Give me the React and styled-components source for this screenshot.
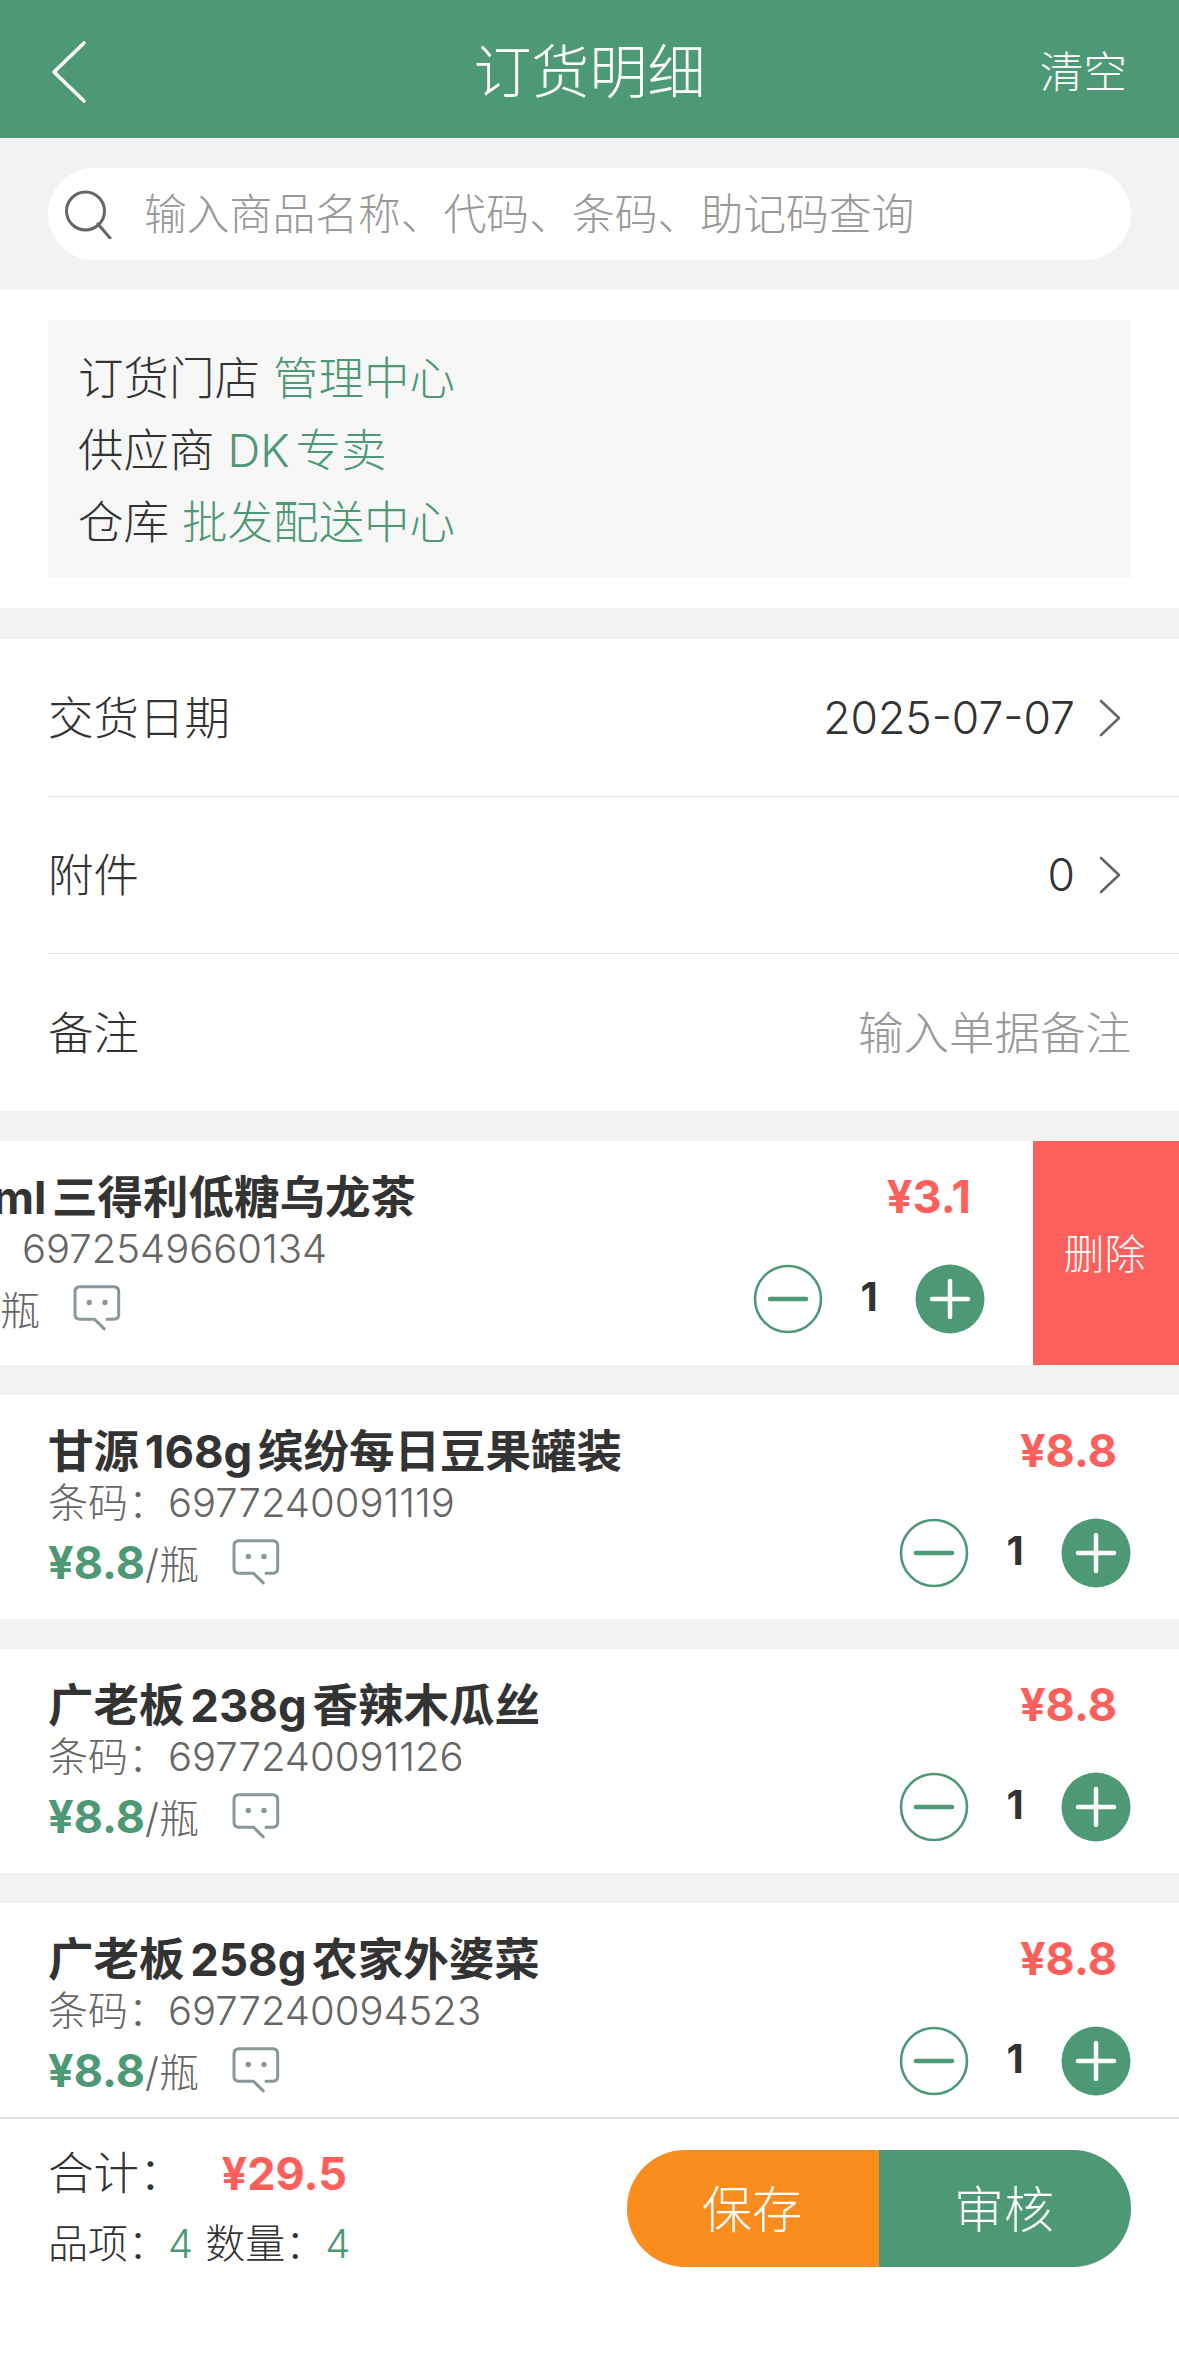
import styled, { createGlobalStyle } from "styled-components";

const GREEN = "#4e9975";
const RED = "#fd5f5c";

const GlobalStyle = createGlobalStyle`
  html, body {
    margin: 0;
    padding: 0;
    background: #fff;
  }
  * {
    box-sizing: border-box;
  }
`;

const Page = styled.div`
  width: 1179px;
  height: 2358px;
  display: flex;
  flex-direction: column;
  overflow: hidden;
  background: #f2f2f2;
  color: #333;
  font-family: Inter, "Noto Sans CJK SC", sans-serif;
`;

const Header = styled.div`
  height: 138px;
  flex: none;
  background: ${GREEN};
  color: #fff;
  display: flex;
  align-items: center;
  justify-content: space-between;
  padding: 6px 52px 0 50px;
  position: relative;
`;

const Title = styled.div`
  position: absolute;
  left: 0;
  right: 0;
  top: 0;
  padding-top: 3px;
  text-align: center;
  font-size: 58px;
  line-height: 138px;
  font-weight: 300;
`;

const Clear = styled.div`
  font-size: 43.5px;
  font-weight: 300;
  margin-top: -6px;
  position: relative;
`;

const SearchBand = styled.div`
  height: 152px;
  flex: none;
  padding: 30px 48px;
`;

const SearchPill = styled.div`
  height: 92px;
  background: #fff;
  border-radius: 46px;
  display: flex;
  align-items: center;
  padding-left: 16px;
  gap: 32px;
  font-size: 42.8px;
  font-weight: 300;
  color: #999;
`;

const Placeholder = styled.span`
  margin-top: -6px;
`;

const InfoSection = styled.div`
  flex: none;
  background: #fff;
  padding: 30px 48px;
  margin-bottom: 31px;
`;

const InfoBox = styled.div`
  height: 258px;
  background: #f7f7f7;
  padding: 23px 30px;
  font-size: 45.5px;
  line-height: 72px;
  font-weight: 300;
`;

const Hl = styled.span`
  color: ${GREEN};
  margin-left: 13px;
  word-spacing: -7px;
`;

const FieldList = styled.div`
  flex: none;
  background: #fff;
  padding-left: 48px;
  margin-bottom: 30px;
`;

const Field = styled.div`
  height: ${(p) => (p.$first ? "158px" : "157px")};
  display: flex;
  align-items: center;
  justify-content: space-between;
  padding-right: 48px;
  font-size: 45.5px;
  font-weight: 300;
  border-bottom: ${(p) => (p.$last ? "none" : "1.5px solid #e2e2e2")};
`;

const FieldLabel = styled.span`
  margin-top: -6px;
  color: ${(p) => (p.$muted ? "#999" : "#333")};
`;

const FieldValue = styled.div`
  display: flex;
  align-items: center;
`;

const FieldNumber = styled.span`
  font-size: 44.5px;
  margin-right: 23px;
`;

const ChevronIcon = styled.svg`
  margin-right: 9px;
`;

const Items = styled.div`
  flex: 1;
  min-height: 0;
  overflow: hidden;
  display: flex;
  flex-direction: column;
  gap: 30px;
`;

const Item = styled.div`
  flex: none;
  height: 224px;
  background: #fff;
  overflow: hidden;
`;

const ItemInner = styled.div`
  height: 100%;
  position: relative;
  display: flex;
  justify-content: space-between;
  padding: 31px 48px 31px;
  transform: ${(p) => (p.$swiped ? "translateX(-146px)" : "none")};
`;

const ItemLeft = styled.div`
  min-width: 0;
  white-space: nowrap;
`;

const ItemName = styled.div`
  font-size: 45.5px;
  line-height: 54px;
  font-weight: 700;
  word-spacing: -5px;
  margin-top: -1px;
`;

const Barcode = styled.div`
  font-size: 40px;
  line-height: 48px;
  font-weight: 300;
  color: #666;
`;

const PriceLine = styled.div`
  display: flex;
  align-items: center;
  height: 48px;
  margin-top: 11px;
  font-size: 40px;
  font-weight: 300;
  color: #666;
`;

const UnitPrice = styled.span`
  color: ${GREEN};
  font-size: 45px;
  font-weight: 700;
`;

const CommentIcon = styled.svg`
  margin-left: 33px;
`;

const ItemRight = styled.div`
  display: flex;
  flex-direction: column;
  justify-content: space-between;
  align-items: flex-end;
`;

const LinePrice = styled.div`
  color: ${RED};
  font-size: 45px;
  line-height: 50px;
  font-weight: 700;
  margin-right: 14px;
`;

const Stepper = styled.div`
  display: flex;
  align-items: center;
`;

const Qty = styled.div`
  width: 92px;
  text-align: center;
  font-size: 40px;
  font-weight: 700;
  margin-top: -6px;
`;

const DeleteAction = styled.div`
  position: absolute;
  top: 0;
  bottom: 0;
  right: -146px;
  width: 146px;
  padding: 0 3px 4px 0;
  background: ${RED};
  color: #fff;
  font-size: 41px;
  font-weight: 300;
  display: flex;
  align-items: center;
  justify-content: center;
`;

const Footer = styled.div`
  height: 241px;
  flex: none;
  background: #fff;
  border-top: 2px solid #e2e2e2;
  padding: 31px 48px 0;
  display: flex;
  justify-content: space-between;
  align-items: flex-start;
`;

const Totals = styled.div`
  white-space: nowrap;
  margin-top: -3px;
`;

const TotalRow = styled.div`
  display: flex;
  align-items: center;
  font-size: 45.5px;
  line-height: 54px;
  font-weight: 300;
`;

const TotalAmount = styled.span`
  color: ${RED};
  font-size: 45px;
  font-weight: 700;
  margin-left: 37px;
`;

const CountRow = styled.div`
  font-size: 40px;
  line-height: 48px;
  font-weight: 300;
  margin-top: 19px;
`;

const CountValue = styled.span`
  color: ${GREEN};
  margin-right: 12px;
`;

const Actions = styled.div`
  display: flex;
  height: 117px;
  border-radius: 58px;
  overflow: hidden;
`;

const ActionButton = styled.div`
  width: 252px;
  padding: 0 2px 6px 0;
  background: ${(p) => p.$bg};
  color: #fff;
  font-size: 50px;
  font-weight: 300;
  display: flex;
  align-items: center;
  justify-content: center;
`;

const BackIcon = () => (
  <svg width="38" height="64" viewBox="0 0 38 64" style={{ position: "relative" }}>
    <path d="M34 3 L4 32 L34 61" fill="none" stroke="#fff" strokeWidth="3.6" strokeLinecap="round" strokeLinejoin="round" />
  </svg>
);

const SearchIcon = () => (
  <svg width="48" height="50" viewBox="0 0 48 50">
    <circle cx="21.5" cy="22" r="19" fill="none" stroke="#666" strokeWidth="3" />
    <path d="M34 35 L46 49" fill="none" stroke="#666" strokeWidth="3" strokeLinecap="round" />
  </svg>
);

const Chevron = () => (
  <ChevronIcon width="24" height="38" viewBox="0 0 24 38">
    <path d="M3 2 L21 19 L3 36" fill="none" stroke="#666" strokeWidth="2.6" strokeLinecap="round" strokeLinejoin="round" />
  </ChevronIcon>
);

const Comment = () => (
  <CommentIcon width="48" height="46" viewBox="0 0 48 46">
    <path
      d="M34 34.2 H40.7 Q45.7 34.2 45.7 29.2 V6.8 Q45.7 1.8 40.7 1.8 H7 Q2 1.8 2 6.8 V29.2 Q2 34.2 7 34.2 H21.3 L31.3 43.8"
      fill="none"
      stroke="#87979a"
      strokeWidth="3"
      strokeLinecap="round"
      strokeLinejoin="round"
    />
    <circle cx="16.3" cy="17.5" r="2.7" fill="#87979a" />
    <circle cx="32" cy="17.5" r="2.7" fill="#87979a" />
  </CommentIcon>
);

const Minus = () => (
  <svg width="70" height="70" viewBox="0 0 70 70">
    <circle cx="35" cy="35" r="33" fill="#fff" stroke={GREEN} strokeWidth="2.6" />
    <path d="M17 35 H53" stroke={GREEN} strokeWidth="4.5" strokeLinecap="round" />
  </svg>
);

const Plus = () => (
  <svg width="70" height="70" viewBox="0 0 70 70">
    <circle cx="35" cy="35" r="34.5" fill={GREEN} />
    <path d="M17 35 H53 M35 17 V53" stroke="#fff" strokeWidth="4.5" strokeLinecap="round" />
  </svg>
);

const items = [
  { name: "500ml 三得利低糖乌龙茶", code: "6972549660134", price: "¥3.1", swiped: true },
  { name: "甘源 168g 缤纷每日豆果罐装", code: "6977240091119", price: "¥8.8" },
  { name: "广老板 238g 香辣木瓜丝", code: "6977240091126", price: "¥8.8" },
  { name: "广老板 258g 农家外婆菜", code: "6977240094523", price: "¥8.8" },
];

const App = () => {
  return (
    <Page>
      <GlobalStyle />
      <Header>
        <Title>订货明细</Title>
        <BackIcon />
        <Clear>清空</Clear>
      </Header>

      <SearchBand>
        <SearchPill>
          <SearchIcon />
          <Placeholder>输入商品名称、代码、条码、助记码查询</Placeholder>
        </SearchPill>
      </SearchBand>

      <InfoSection>
        <InfoBox>
          <div>订货门店<Hl>管理中心</Hl></div>
          <div>供应商<Hl>DK 专卖</Hl></div>
          <div>仓库<Hl>批发配送中心</Hl></div>
        </InfoBox>
      </InfoSection>

      <FieldList>
        <Field $first>
          <FieldLabel>交货日期</FieldLabel>
          <FieldValue><FieldNumber>2025-07-07</FieldNumber><Chevron /></FieldValue>
        </Field>
        <Field>
          <FieldLabel>附件</FieldLabel>
          <FieldValue><FieldNumber>0</FieldNumber><Chevron /></FieldValue>
        </Field>
        <Field $last>
          <FieldLabel>备注</FieldLabel>
          <FieldLabel $muted>输入单据备注</FieldLabel>
        </Field>
      </FieldList>

      <Items>
        {items.map((item) => (
          <Item key={item.code}>
            <ItemInner $swiped={item.swiped}>
              <ItemLeft>
                <ItemName>{item.name}</ItemName>
                <Barcode>条码：{item.code}</Barcode>
                <PriceLine>
                  <UnitPrice>{item.price}</UnitPrice>/瓶
                  <Comment />
                </PriceLine>
              </ItemLeft>
              <ItemRight>
                <LinePrice>{item.price}</LinePrice>
                <Stepper>
                  <Minus />
                  <Qty>1</Qty>
                  <Plus />
                </Stepper>
              </ItemRight>
              {item.swiped && <DeleteAction>删除</DeleteAction>}
            </ItemInner>
          </Item>
        ))}
      </Items>

      <Footer>
        <Totals>
          <TotalRow>合计：<TotalAmount>¥29.5</TotalAmount></TotalRow>
          <CountRow>
            品项：<CountValue>4</CountValue>数量：<CountValue>4</CountValue>
          </CountRow>
        </Totals>
        <Actions>
          <ActionButton $bg="#fb8c1e">保存</ActionButton>
          <ActionButton $bg={GREEN}>审核</ActionButton>
        </Actions>
      </Footer>
    </Page>
  );
};

export default App;
